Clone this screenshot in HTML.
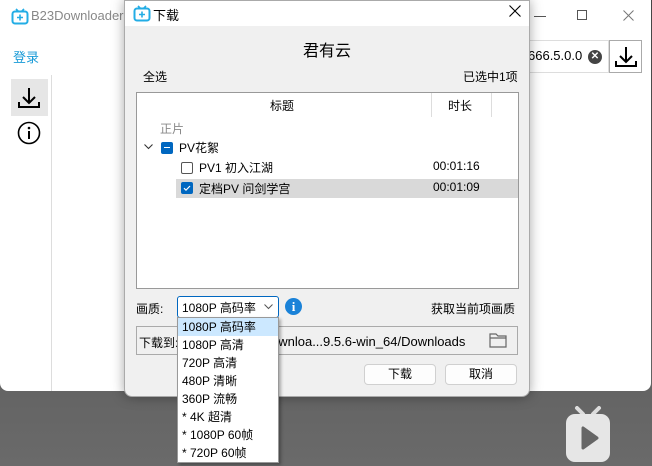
<!DOCTYPE html>
<html><head><meta charset="utf-8"><style>
*{margin:0;padding:0;box-sizing:border-box}
body{width:652px;height:466px;overflow:hidden;position:relative;font-family:"Liberation Sans","Noto Sans CJK SC",sans-serif;font-size:12px;color:#000;background:linear-gradient(#454545,#6a6a6a)}
.a{position:absolute}
.main{left:0;top:0;width:651px;height:391px;background:#fff;border-radius:0 0 8px 8px}
.dlg{left:124px;top:0;width:406px;height:397px;background:#f0f0f0;border:1px solid #aaa;border-radius:0 0 8px 8px;box-shadow:0 0 12px rgba(0,0,0,.35)}
.btn{background:#fdfdfd;border:1px solid #d0d0d0;border-radius:4px;text-align:center;line-height:19px;font-size:12px}
</style></head><body>
<div class="a main">
  <svg class="a" style="left:11px;top:7px" width="18" height="18" viewBox="0 0 18 18"><path d="M5 2l2.5 2.5M13 2l-2.5 2.5" stroke="#23ade5" stroke-width="1.6"/><rect x="1.5" y="4.5" width="15" height="12" rx="2.5" fill="none" stroke="#23ade5" stroke-width="2"/><path d="M9 7.5v6M6 10.5h6" stroke="#23ade5" stroke-width="1.6"/></svg>
  <div class="a" style="left:31px;top:8px;color:#888;font-size:13px">B23Downloader</div>
  <div class="a" style="left:534px;top:16px;width:12px;border-top:1px solid #555"></div>
  <div class="a" style="left:577px;top:10px;width:10px;height:10px;border:1px solid #555"></div>
  <svg class="a" style="left:623px;top:10px" width="11" height="11" viewBox="0 0 11 11"><path d="M0.5 0.5l10 10M10.5 0.5l-10 10" stroke="#777" stroke-width="1"/></svg>
  <div class="a" style="left:13px;top:47px;color:#1a9bd7;font-size:13px">登录</div>
  <div class="a" style="left:11px;top:79px;width:37px;height:37px;background:#e6e6e6"></div>
  <svg class="a" style="left:16px;top:85px" width="26" height="26" viewBox="0 0 26 26"><path d="M13 3v15M7 12l6 6 6-6M3 17v5h20v-5" fill="none" stroke="#000" stroke-width="2"/></svg>
  <svg class="a" style="left:17px;top:121px" width="24" height="24" viewBox="0 0 24 24"><circle cx="12" cy="12" r="10.5" fill="none" stroke="#000" stroke-width="1.6"/><path d="M12 10v8" stroke="#000" stroke-width="2"/><circle cx="12" cy="7" r="1.3"/></svg>
  <div class="a" style="left:51px;top:75px;height:316px;border-left:1px solid #ddd"></div>
  <div class="a" style="left:520px;top:40px;width:89px;height:33px;border:1px solid #ddd;border-left:none"></div>
  <div class="a" style="left:528px;top:48px;font-size:13px">666.5.0.0</div>
  <div class="a" style="left:588px;top:50px;width:14px;height:14px;border-radius:50%;background:#444;color:#fff;font-size:10px;line-height:14px;text-align:center;font-weight:bold">✕</div>
  <div class="a" style="left:609px;top:40px;width:33px;height:33px;border:1px solid #aaa"></div>
  <svg class="a" style="left:613px;top:44px" width="26" height="26" viewBox="0 0 26 26"><path d="M13 3v15M7 12l6 6 6-6M3 17v5h20v-5" fill="none" stroke="#000" stroke-width="2"/></svg>
</div>
<div class="a dlg">
  <div class="a" style="left:0;top:0;width:404px;height:25px;background:#fff"></div>
  <svg class="a" style="left:8px;top:3px" width="18" height="18" viewBox="0 0 18 18"><path d="M5 2l2.5 2.5M13 2l-2.5 2.5" stroke="#23ade5" stroke-width="1.6"/><rect x="1.5" y="4.5" width="15" height="12" rx="2.5" fill="none" stroke="#23ade5" stroke-width="2"/><path d="M9 7.5v6M6 10.5h6" stroke="#23ade5" stroke-width="1.6"/></svg>
  <div class="a" style="left:28px;top:4px;font-size:13px">下载</div>
  <svg class="a" style="left:384px;top:4px" width="12" height="12" viewBox="0 0 12 12"><path d="M0.5 0.5l11 11M11.5 0.5l-11 11" stroke="#000" stroke-width="1.1"/></svg>
  <div class="a" style="left:0;width:404px;top:36px;text-align:center;font-size:16px">君有云</div>
  <div class="a" style="left:18px;top:67px">全选</div>
  <div class="a" style="left:338px;top:67px">已选中1项</div>
  <div class="a" style="left:11px;top:91px;width:383px;height:197px;background:#fff;border:1px solid #999">
    <div class="a" style="left:133px;top:4px">标题</div>
    <div class="a" style="left:294px;top:0;height:24px;border-left:1px solid #ddd"></div>
    <div class="a" style="left:354px;top:0;height:24px;border-left:1px solid #ddd"></div>
    <div class="a" style="left:311px;top:4px">时长</div>
    <div class="a" style="left:23px;top:27px;color:#888">正片</div>
    <svg class="a" style="left:7px;top:51px" width="9" height="6" viewBox="0 0 9 6"><path d="M0.5 0.5l4 4 4-4" fill="none" stroke="#333" stroke-width="1.1"/></svg>
    <div class="a" style="left:24px;top:49px;width:12px;height:12px;background:#0067c0;border-radius:2px"><div style="margin:5px 3px;width:6px;border-top:1.5px solid #fff"></div></div>
    <div class="a" style="left:42px;top:46px">PV花絮</div>
    <div class="a" style="left:44px;top:69px;width:12px;height:12px;border:1px solid #555;border-radius:2px"></div>
    <div class="a" style="left:62px;top:66px">PV1 初入江湖</div>
    <div class="a" style="left:296px;top:66px">00:01:16</div>
    <div class="a" style="left:39px;top:86px;width:342px;height:19px;background:#d9d9d9"></div>
    <div class="a" style="left:44px;top:89px;width:12px;height:12px;background:#0067c0;border-radius:2px"><svg width="12" height="12" viewBox="0 0 12 12" style="display:block"><path d="M3 6.2l2 2 4-4.2" fill="none" stroke="#fff" stroke-width="1.2"/></svg></div>
    <div class="a" style="left:62px;top:87px">定档PV 问剑学宫</div>
    <div class="a" style="left:296px;top:87px">00:01:09</div>
  </div>
  <div class="a" style="left:11px;top:299px">画质:</div>
  <div class="a" style="left:52px;top:295px;width:102px;height:22px;background:#fff;border:1px solid #0067c0;border-radius:3px"></div>
  <div class="a" style="left:57px;top:298px">1080P 高码率</div>
  <svg class="a" style="left:139px;top:303px" width="9" height="6" viewBox="0 0 9 6"><path d="M0.5 0.5l4 4 4-4" fill="none" stroke="#555" stroke-width="1"/></svg>
  <div class="a" style="left:160px;top:297px;width:17px;height:17px;border-radius:50%;background:#1a82d8;color:#fff;font-weight:bold;text-align:center;line-height:17px;font-family:'Liberation Serif',serif;font-size:13px">i</div>
  <div class="a" style="left:306px;top:299px">获取当前项画质</div>
  <div class="a" style="left:11px;top:325px;width:382px;height:29px;border:1px solid #aaa"></div>
  <div class="a" style="left:14px;top:333px">下载到:</div>
  <div class="a" style="left:146px;top:333px;font-size:13px">ownloa...9.5.6-win_64/Downloads</div>
  <svg class="a" style="left:364px;top:331px" width="18" height="16" viewBox="0 0 18 16"><path d="M1 2h6l2 2h8v11H1z M1 6h16" fill="none" stroke="#666" stroke-width="1.2"/></svg>
  <div class="a btn" style="left:239px;top:363px;width:72px;height:21px">下载</div>
  <div class="a btn" style="left:320px;top:363px;width:72px;height:21px">取消</div>
</div>
<div class="a" style="left:177px;top:317px;width:102px;height:146px;background:#fff;border:1px solid #999;box-shadow:2px 2px 3px rgba(0,0,0,.3);font-size:12px;line-height:18px">
  <div style="background:#cce8ff;padding-left:4px">1080P 高码率</div>
  <div style="padding-left:4px">1080P 高清</div>
  <div style="padding-left:4px">720P 高清</div>
  <div style="padding-left:4px">480P 清晰</div>
  <div style="padding-left:4px">360P 流畅</div>
  <div style="padding-left:4px">* 4K 超清</div>
  <div style="padding-left:4px">* 1080P 60帧</div>
  <div style="padding-left:4px">* 720P 60帧</div>
</div>
<svg class="a" style="left:566px;top:406px" width="44" height="56" viewBox="0 0 44 56"><path d="M11 2l6 6M33 2l-6 6" stroke="#ddd" stroke-width="4" stroke-linecap="round"/><rect x="0" y="8" width="44" height="48" rx="9" fill="#e6e6e6"/><path d="M17 22v20l14-10z" fill="#666" stroke="#666" stroke-width="3" stroke-linejoin="round"/></svg>
</body></html>
